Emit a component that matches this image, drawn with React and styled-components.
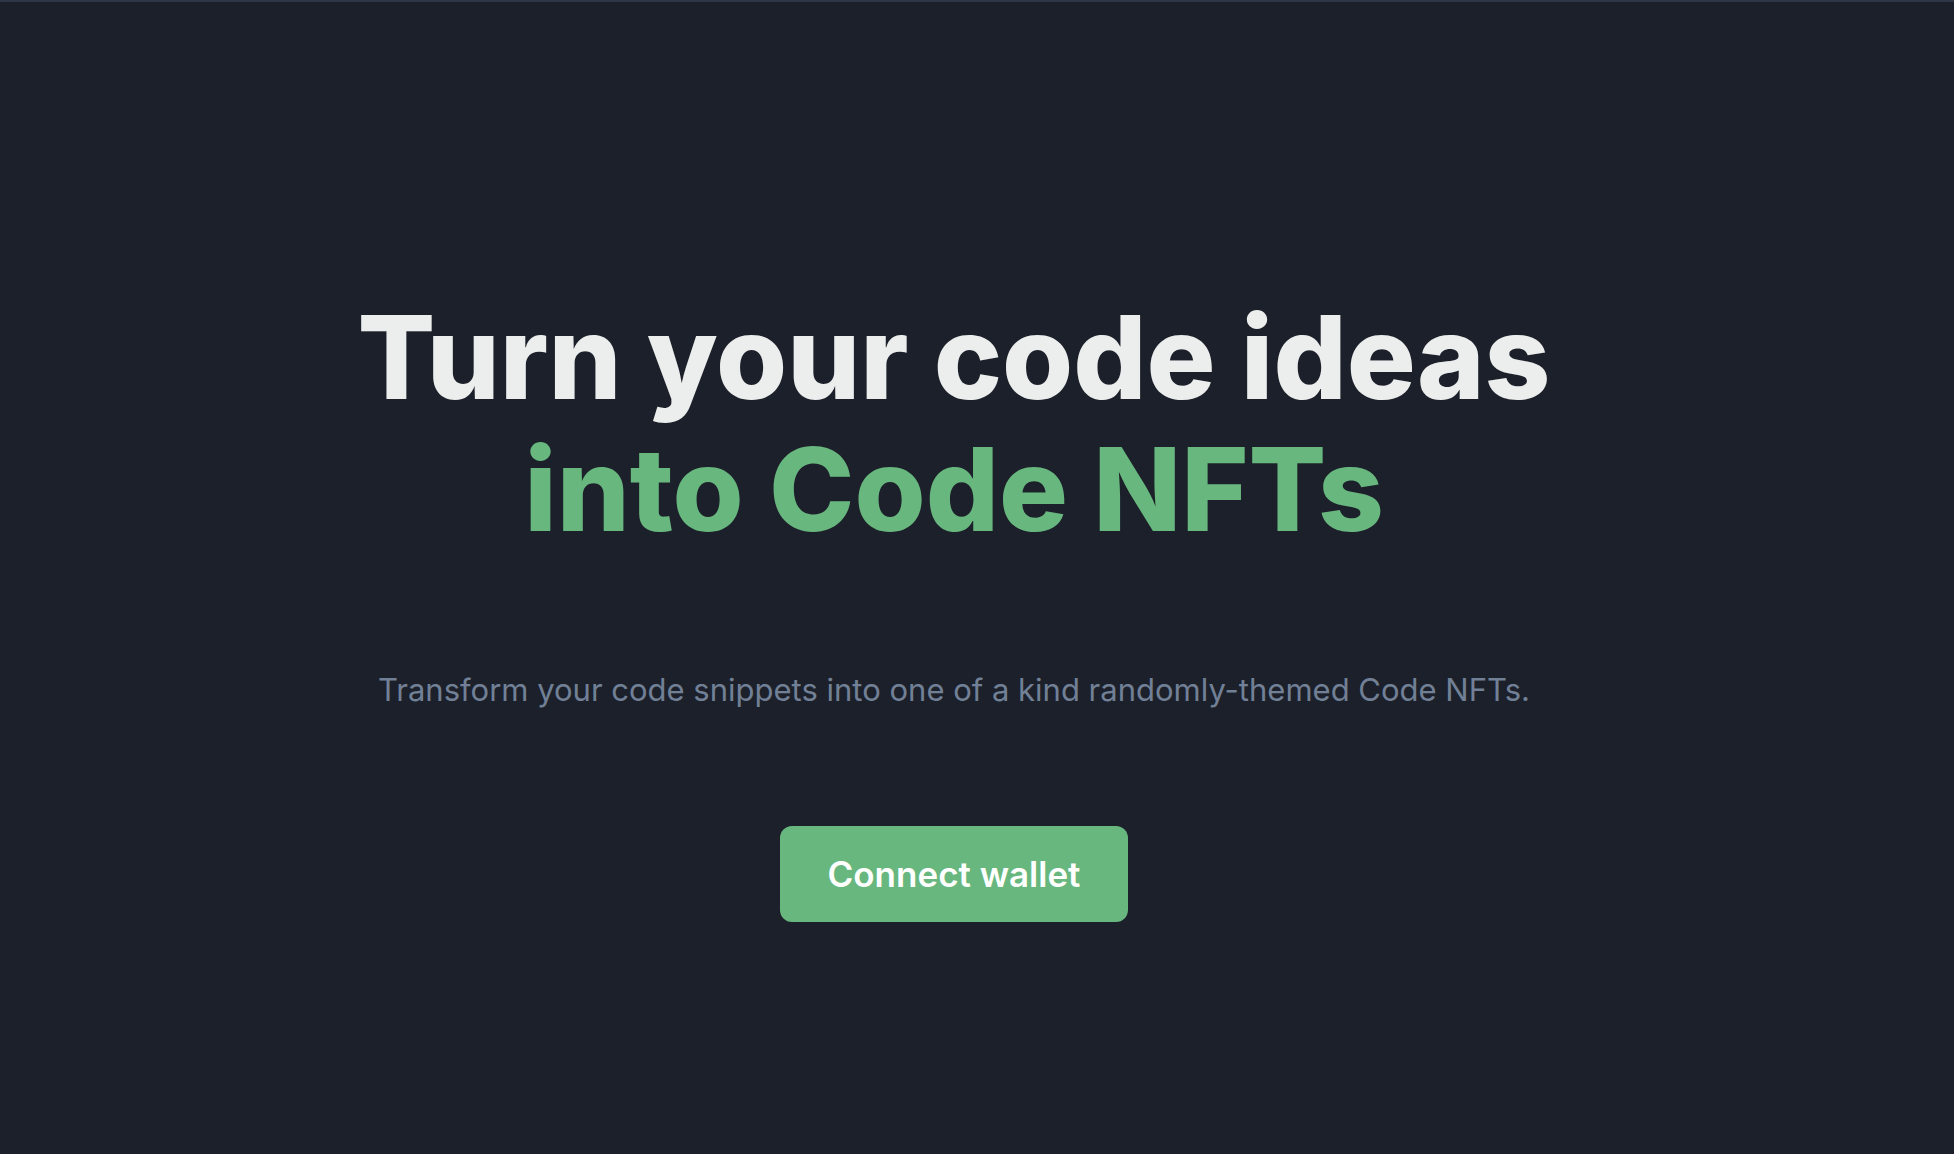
import React from "react";
import styled, { createGlobalStyle } from "styled-components";

const GlobalStyle = createGlobalStyle`
  * { box-sizing: border-box; }
  body {
    margin: 0;
    background: #1c202a;
    font-family: Inter, "Liberation Sans", sans-serif;
  }
`;

const Hero = styled.main`
  min-height: 100vh;
  padding: 290px 46px 64px 0;
  border-top: 2px solid #2d3748;
  display: flex;
  flex-direction: column;
  align-items: center;
  text-align: center;
`;

const Title = styled.h1`
  margin: 0;
  color: #eceeed;
  font-size: 115px;
  font-weight: 800;
  line-height: 132px;
`;

const Accent = styled.span`
  display: block;
  color: #68b77e;
`;

const Lead = styled.p`
  margin: 110px 0 0;
  color: #718096;
  font-size: 31px;
  line-height: 48px;
`;

const ConnectButton = styled.button`
  margin-top: 112px;
  padding: 24px 48px;
  border: 0;
  border-radius: 12px;
  background: #68b77e;
  color: #ffffff;
  font: inherit;
  font-size: 35px;
  font-weight: 600;
  line-height: 48px;
  cursor: pointer;
`;

export default function App() {
  return (
    <>
      <GlobalStyle />
      <Hero>
        <Title>
          Turn your code ideas
          <Accent>into Code NFTs</Accent>
        </Title>
        <Lead>
          Transform your code snippets into one of a kind randomly-themed Code NFTs.
        </Lead>
        <ConnectButton type="button">Connect wallet</ConnectButton>
      </Hero>
    </>
  );
}
